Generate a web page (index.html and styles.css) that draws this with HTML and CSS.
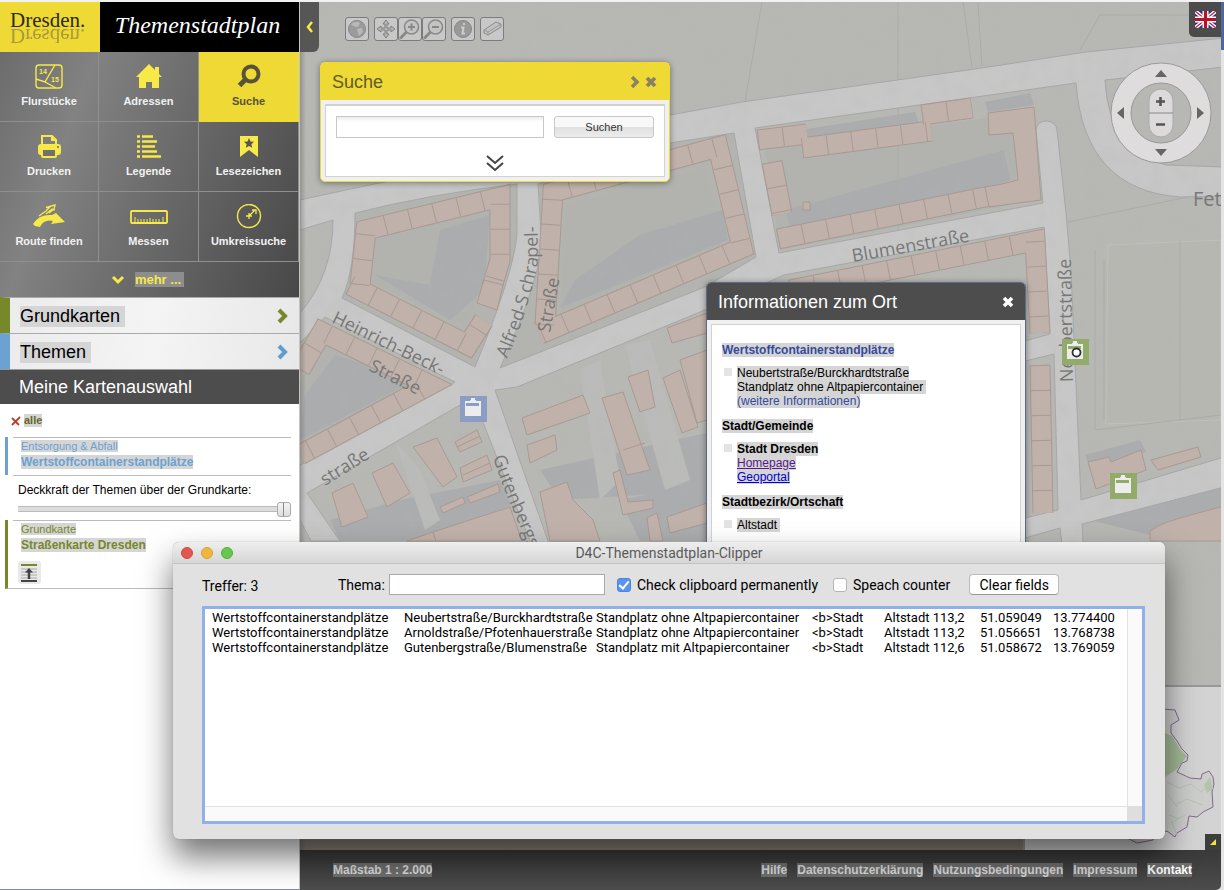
FILE: index.html
```html
<!DOCTYPE html>
<html lang="de">
<head>
<meta charset="utf-8">
<title>Themenstadtplan Dresden</title>
<link rel="stylesheet" href="styles.css">
</head>
<body>
<div class="app">
  <aside class="sidebar">
    <header class="brand">
      <a class="brand-logo" href="#"><span>Dresden.</span><span class="mirror" aria-hidden="true">Dresden.</span></a>
      <h1 class="brand-title">Themenstadtplan</h1>
    </header>
    <nav class="tools">
      <div class="tool-grid">
        <button class="tool" type="button">
          <svg width="28" height="26" viewBox="0 0 28 26"><rect x="1" y="1" width="26" height="23" rx="3" fill="none" stroke="#f7e948" stroke-width="1.4"/><path d="M20 1L10 18L1 15M10 18L21 24" fill="none" stroke="#f7e948" stroke-width="1.4"/><text x="4" y="10" class="tiny">14</text><text x="16" y="18" class="tiny">15</text></svg>
          <span>Flurstücke</span></button>
        <button class="tool" type="button">
          <svg width="28" height="26" viewBox="0 0 28 26"><path d="M14 0L27 13H24V24H17V18H11V24H4V13H1Z" fill="#f7e948"/><path d="M20 3h4v8h-4z" fill="#f7e948"/></svg>
          <span>Adressen</span></button>
        <button class="tool active" type="button">
          <svg width="28" height="26" viewBox="0 0 28 26"><circle cx="16" cy="10" r="7.500" fill="none" stroke="#56533a" stroke-width="4"/><path d="M10.500 15.500L4.500 21.500" stroke="#56533a" stroke-width="5"/></svg>
          <span>Suche</span></button>
        <button class="tool" type="button">
          <svg width="28" height="26" viewBox="0 0 28 26"><path d="M7 12V2h10l4 4v6" fill="none" stroke="#f7e948" stroke-width="2"/><path d="M16 2v5h5z" fill="#f7e948"/><rect x="3" y="10" width="23" height="11" rx="3" fill="#f7e948"/><rect x="7" y="15" width="14" height="8" rx="1" fill="#707070" stroke="#f7e948" stroke-width="2"/><circle cx="23" cy="13" r="1" fill="#707070"/></svg>
          <span>Drucken</span></button>
        <button class="tool" type="button">
          <svg width="28" height="26" viewBox="0 0 28 26"><path d="M2 2.500h3m2 0h11M2 7.500h3m2 0h15M2 12.500h3m2 0h13M2 17.500h3m2 0h15M2 22.500h3m2 0h19" stroke="#f7e948" stroke-width="2.600"/></svg>
          <span>Legende</span></button>
        <button class="tool" type="button">
          <svg width="28" height="26" viewBox="0 0 28 26"><path d="M5 2H23V23L14 16L5 23Z" fill="#f7e948"/><path d="M14 4l1.500 3.500 3.500.3-2.600 2.400.8 3.600L14 12l-3.200 1.800.8-3.600L9 7.800l3.500-.3z" fill="#555"/></svg>
          <span>Lesezeichen</span></button>
        <button class="tool" type="button">
          <svg width="34" height="26" viewBox="0 0 34 26"><path d="M1 20Q7 10 20 11L24 9L33 18L19 20L21 17Q12 15 8 23L3 22Z" fill="#f7e948"/><path d="M7 12L14 7L18 3L14 3.500L23 1L22 6L20 5L14 10M17 9L22 5" fill="none" stroke="#f7e948" stroke-width="1.300"/></svg>
          <span>Route finden</span></button>
        <button class="tool" type="button">
          <svg width="38" height="26" viewBox="0 0 38 26"><rect x="1" y="7" width="36" height="12" rx="1" fill="none" stroke="#f7e948" stroke-width="1.800"/><path d="M5 18v-5M8 18v-3M11 18v-3M14 18v-3M17 18v-3M20 18v-4M23 18v-3M26 18v-3M29 18v-3M33 18v-5" stroke="#f7e948"/></svg>
          <span>Messen</span></button>
        <button class="tool" type="button">
          <svg width="28" height="26" viewBox="0 0 28 26"><circle cx="14" cy="12" r="11.500" fill="none" stroke="#f7e948" stroke-width="1.400"/><path d="M14 12L20 6M17 6h4v4M11 12h6M14 9v6" fill="none" stroke="#f7e948" stroke-width="1.300"/></svg>
          <span>Umkreissuche</span></button>
      </div>
      <button class="more" type="button">
        <svg width="14" height="12" viewBox="0 0 14 12"><path d="M2 3l5 5 5-5" fill="none" stroke="#f7e948" stroke-width="3"/></svg>
        <span>mehr ...</span></button>
    </nav>
    <button class="fold green" type="button"><span class="sel">Grundkarten&nbsp;</span><svg width="14" height="18" viewBox="0 0 14 18"><path d="M4 3l6 6-6 6" fill="none" stroke="#76882a" stroke-width="4"/></svg></button>
    <button class="fold blue" type="button"><span class="sel">Themen&nbsp;</span><svg width="14" height="18" viewBox="0 0 14 18"><path d="M4 3l6 6-6 6" fill="none" stroke="#5f9cd0" stroke-width="4"/></svg></button>
    <h2 class="selection-title">Meine Kartenauswahl</h2>
    <section class="selection">
      <button class="remove-all" type="button"><svg width="10" height="10" viewBox="0 0 10 10"><path d="M1 9L9 1M1 2l7 7" stroke="#b5402c" stroke-width="1.800"/></svg><span class="sel">alle</span></button>
      <div class="layer blue">
        <p><span class="sel">Entsorgung &amp; Abfall</span></p>
        <p><strong class="sel">Wertstoffcontainerstandplätze</strong></p>
      </div>
      <div class="opacity">
        <label for="opacity">Deckkraft der Themen über der Grundkarte:</label>
        <input id="opacity" type="range" min="0" max="100" value="100">
      </div>
      <div class="layer green">
        <p><span class="sel">Grundkarte</span></p>
        <p><strong class="sel">Straßenkarte Dresden</strong></p>
        <button class="to-top" type="button" aria-label="Nach oben"><svg width="16" height="18" viewBox="0 0 16 18"><path d="M0 1h16" stroke="#76882a" stroke-width="2"/><path d="M0 5h16M0 8h16M0 11h16M0 14h16" stroke="#aaa"/><path d="M0 17h16" stroke="#444" stroke-width="2"/><path d="M8 15V6" stroke="#444" stroke-width="2.500"/><path d="M4 8.500L8 4l4 4.500z" fill="#444"/></svg></button>
      </div>
    </section>
  </aside>

  <main class="stage">
    <div class="map">
      <svg class="map-canvas" viewBox="300 2 921 848" preserveAspectRatio="xMinYMin slice">
        <defs>
          <filter id="grain" x="0" y="0" width="100%" height="100%"><feTurbulence type="fractalNoise" baseFrequency="0.060" numOctaves="4" seed="8"/><feColorMatrix values="0 0 0 0 .45  0 0 0 0 .46  0 0 0 0 .44  1.600 0 0 0 -.650"/></filter>
          <path id="r1" d="M360 285L366 230L500 197L500 260L492 287"/>
          <path id="r2" d="M350 285L468 345L484 320"/>
          <path id="r3" d="M545 325L553 192L718 147L742 248L540 334"/>
          <path id="r4" d="M758 140L807 134"/>
          <path id="r5" d="M802 148L931 131"/>
          <path id="r6" d="M922 115L972 108"/>
          <path id="r7" d="M772 162L782 214"/>
          <path id="r8" d="M778 239L990 196"/>
          <path id="r9" d="M790 290L1035 241L1040 333"/>
          <path id="r10" d="M1040 365L1043 513"/>
          <path id="r11" d="M300 370L322 332L430 385L300 455"/>
          <path id="alfred" d="M507 359C522 325 530 300 538 262L537 190"/>
          <path id="guten" d="M493 457C503 490 518 520 540 575"/>
        </defs>
        <rect class="ground" x="300" y="0" width="921" height="850"/>
        <path class="court" d="M370 238L490 208L486 280L468 325L362 280Z"/>
        <path class="court" d="M765 150L985 118L1030 110L1036 200L780 250Z"/>
        <path class="shade" d="M800 130L915 112L920 125L808 140ZM786 210L1004 150L1010 180L984 190L790 228ZM985 102L1030 93L1034 105L988 112Z"/>
        <path class="court" d="M300 380L325 345L425 388L300 448Z"/>
        <path class="shade" d="M305 395L335 355L415 380L300 440ZM330 520L400 500L500 480L512 505L420 541H340ZM540 470L720 430V490L560 500ZM620 500L720 480V541H640ZM1090 520L1221 482V515L1150 535ZM1085 455L1140 440L1146 452L1090 468Z"/>
        <path class="patch" d="M625 345L650 340L690 480L665 490ZM580 370L600 360L620 480L600 500ZM395 440L420 470L440 520L425 530ZM545 350L610 330L615 345L550 365Z"/>
        <path class="field" d="M1108 245L1221 240V420L1106 424Z"/>
        <path class="field-line" d="M762 2L745 102M898 2V240M963 2L972 68M978 2L982 66M1221 15H1100L1080 50M1068 222L1221 190M1095 250V430L1221 415M1104 260L1104 420M1180 240V420"/>
        <g class="road">
          <path d="M300 200Q390 180 520 155L670 115L742 102L982 68L1086 52L1224 38V67L1105 80Q1108 150 1166 165L1224 167V196L1180 197Q1084 190 1076 83L755 128L779 253L1043 203L1036 130Q1037 121 1047 121Q1056 122 1057 130L1066 213L1071 270L1081 500L1224 457V487L1082 524L1084 560H1064L1060 528L1025 538V518L1058 510L1054 354L1025 361V341L1050 334L1044 227L784 275L705 310L517 387L495 390L548 541L620 850H590L530 541L482 420L460 405L307 493L340 541H311L300 520V465L455 382L325 317L300 343V313Q333 275 333 220L300 230Z"/>
          <path d="M355 213Q430 194 517 184V233Q515 270 475 367L342 298Q355 270 355 213Z" class="ground"/>
          <path d="M538 184L670 143L734 133L756 257L705 287L500 368Q545 270 541 233Z" class="ground"/>
        </g>
        <path class="court" d="M378 240L490 210L486 270L466 325L366 280Z"/>
        <path class="shade" d="M440 230L490 215L484 290L450 320L375 275L430 285Z"/>
        <path class="court" d="M566 205L705 168L722 245L560 318Z"/>
        <path class="shade" d="M575 280L640 235L722 210L728 240L560 308Z"/>
        <rect x="300" y="0" width="921" height="850" filter="url(#grain)" opacity=".2"/>
        <g class="edge"><use href="#r1"/><use href="#r2"/><use href="#r3"/><use href="#r4"/><use href="#r5"/><use href="#r6"/><use href="#r7"/><use href="#r8"/><use href="#r9"/><use href="#r10"/><use href="#r11"/></g>
        <g class="fill"><use href="#r1"/><use href="#r2"/><use href="#r3"/><use href="#r4"/><use href="#r5"/><use href="#r6"/><use href="#r7"/><use href="#r8"/><use href="#r9"/><use href="#r10"/><use href="#r11"/></g>
        <g class="split"><use href="#r1"/><use href="#r2"/><use href="#r3"/><use href="#r4"/><use href="#r5"/><use href="#r6"/><use href="#r7"/><use href="#r8"/><use href="#r9"/><use href="#r10"/><use href="#r11"/></g>
        <path class="house" d="M988 113L1034 107L1041 200L989 207L985 187L1002 184L1018 180L1016 160L1013 133L989 135ZM1088 462L1109 457L1111 462L1141 450L1146 470L1096 489ZM1151 460L1198 447L1201 457L1158 470ZM1150 531L1162 524L1180 518L1224 506V541H1150ZM332 493L353 483L368 517L342 527ZM372 473L393 463L410 493L387 507ZM413 447L437 438L457 477L443 487ZM455 442L477 430L482 442L460 452ZM460 468L487 455L492 470L463 482ZM440 507L463 497L465 503L443 513ZM467 497L498 484L500 492L470 503ZM407 541L433 532L510 507L522 541ZM522 418L583 395L590 413L527 435ZM527 445L555 435L557 450L530 463ZM602 398L623 392L650 470L627 475ZM628 377L648 370L655 407L640 412ZM663 378L680 370L698 427L682 433ZM680 360L707 350V420L697 423ZM667 328L707 313V333L672 343ZM540 492L567 482L573 500L593 520L600 541H550ZM613 473L620 470L628 502L653 500V508L623 515ZM667 517L707 503V523L670 533ZM647 518L657 513L663 541H650ZM477 303L484 280L503 285L497 310ZM803 202h7v8h-7z"/>
        <path class="house-line" d="M457 447L480 436M463 475L490 463M623 450L645 443M433 532L436 541M890 840v10"/>
        <g class="street">
          <text transform="translate(853 262) rotate(-10)">Blumenstraße</text>
          <text transform="translate(331 322) rotate(26)">Heinrich-Beck-</text>
          <text transform="translate(368 370) rotate(27)">Straße</text>
          <text transform="translate(325 486) rotate(-32)">straße</text>
          <text transform="translate(550 333) rotate(-80)">Straße</text>
          <text transform="translate(1073 382) rotate(-91)">Neubertstraße</text>
          <text><textPath href="#alfred">Alfred-S&#8201;chrapel-</textPath></text>
          <text><textPath href="#guten">Gutenbergs</textPath></text>
          <text x="1193" y="206" class="big">Fet</text>
        </g>
        <path d="M300 839H1200V850H300Z" fill="#8d857e"/>
        <g>
          <g transform="translate(460 396)"><path d="M0 0h27v26H0z" fill="#8b9dc4"/><path d="M5 5h16v15H5zM10 5V4h1V2h4v2h1v1" fill="#ececec"/><path d="M6 7h13v3H6z" fill="#8b9dc4"/></g>
          <g transform="translate(1062 339)"><path d="M0 0h27v26H0z" fill="#93ab6a"/><path d="M5 5h16v15H5zM10 5V4h1V2h4v2h1v1" fill="#ececec"/><path d="M6 7h13v3H6z" fill="#93ab6a"/><circle cx="14.500" cy="13.500" r="4" fill="#fff" stroke="#2d3038" stroke-width="1.800"/></g>
          <g transform="translate(1110 473)"><path d="M0 0h27v26H0z" fill="#93ab6a"/><path d="M5 5h16v15H5zM10 5V4h1V2h4v2h1v1" fill="#ececec"/><path d="M6 7h13v3H6z" fill="#93ab6a"/></g>
        </g>
      </svg>

      <button class="collapse" type="button" aria-label="Einklappen"><svg width="10" height="14" viewBox="0 0 10 14"><path d="M7 2L3 7l4 5" fill="none" stroke="#f7e948" stroke-width="2.500"/></svg></button>

      <div class="map-tools">
        <button type="button" aria-label="Gesamtansicht"><svg viewBox="0 0 22 22"><circle cx="11" cy="11" r="8.500" fill="#9b9b9b" stroke="#888"/><path d="M5 6q5-4 9-1l-2 4-5-1zM11 11l5-1 1 4-4 4-1-3z" fill="#b8b8b8"/></svg></button>
        <div class="map-tool-group">
          <button type="button" aria-label="Verschieben"><svg viewBox="0 0 22 22"><path d="M11 2l3 4h-2v4h4V8l4 3-4 3v-2h-4v4h2l-3 4-3-4h2v-4H6v2l-4-3 4-3v2h4V6H8z" fill="#b5b5b5" stroke="#808080"/></svg></button>
          <button type="button" aria-label="Vergrößern"><svg viewBox="0 0 22 22"><circle cx="12.500" cy="9" r="7" fill="#c4c4c4" stroke="#8a8a8a" stroke-width="1.600"/><path d="M9 9h7M12.500 5.500v7" stroke="#888" stroke-width="2"/><path d="M7.500 14L1 20.500" stroke="#8a8a8a" stroke-width="3"/></svg></button>
          <button type="button" aria-label="Verkleinern"><svg viewBox="0 0 22 22"><circle cx="12.500" cy="9" r="7" fill="#c4c4c4" stroke="#8a8a8a" stroke-width="1.600"/><path d="M9 9h7" stroke="#888" stroke-width="2"/><path d="M7.500 14L1 20.500" stroke="#8a8a8a" stroke-width="3"/></svg></button>
        </div>
        <button type="button" aria-label="Information"><svg viewBox="0 0 22 22"><circle cx="11" cy="11" r="8.500" fill="#999" stroke="#888"/><path d="M12 5v2M9 9.500h2.500l-1 6h2.500" fill="none" stroke="#ccc" stroke-width="2"/></svg></button>
        <button type="button" aria-label="Löschen"><svg viewBox="0 0 22 22"><path d="M3 12L15 4l5 2v3L7 17l-4-2z" fill="#c2c2c2" stroke="#8a8a8a"/><path d="M3 12l4 2 13-8M7 14v3" fill="none" stroke="#999"/></svg></button>
      </div>

      <section class="panel search">
        <header><h2>Suche</h2>
          <button type="button" aria-label="Minimieren"><svg width="12" height="12" viewBox="0 0 12 12"><path d="M3 1l5 5-5 5" fill="none" stroke="#8a8165" stroke-width="3.500"/></svg></button>
          <button type="button" aria-label="Schließen"><svg width="12" height="12" viewBox="0 0 12 12"><path d="M2 2l8 8M10 2l-8 8" stroke="#8a8165" stroke-width="3.800"/></svg></button>
        </header>
        <form class="panel-body">
          <div class="search-row"><input type="text" aria-label="Suchbegriff"><button type="button">Suchen</button></div>
          <button class="expand" type="button" aria-label="Mehr"><svg width="18" height="18" viewBox="0 0 18 18"><path d="M1 2l8 7 8-7M1 9l8 7 8-7" fill="none" stroke="#444" stroke-width="2"/></svg></button>
        </form>
      </section>

      <section class="panel info">
        <header><h2>Informationen zum Ort</h2>
          <button type="button" aria-label="Schließen"><svg width="12" height="12" viewBox="0 0 12 12"><path d="M2 2l8 8M10 2l-8 8" stroke="#fff" stroke-width="3.600"/></svg></button>
        </header>
        <div class="panel-body">
          <h3 class="topic"><span class="sel">Wertstoffcontainerstandplätze</span></h3>
          <ul><li><span class="sel">Neubertstraße/Burckhardtstraße</span><br><span class="sel">Standplatz ohne Altpapiercontainer&nbsp;</span><br><a class="sel plain" href="#">(weitere Informationen)</a></li></ul>
          <h3><span class="sel">Stadt/Gemeinde</span></h3>
          <ul><li><strong class="sel">Stadt Dresden</strong><br><a class="sel visited" href="#">Homepage</a><br><a class="sel link" href="#">Geoportal</a></li></ul>
          <h3><span class="sel">Stadtbezirk/Ortschaft</span></h3>
          <ul><li><span class="sel">Altstadt&nbsp;</span></li></ul>
        </div>
      </section>

      <a class="language" href="#" aria-label="English"><svg width="21" height="17" viewBox="0 0 21 17"><rect width="21" height="17" rx="1" fill="#2b3484"/><path d="M0 0l21 17M21 0L0 17" stroke="#fff" stroke-width="4"/><path d="M0 0l21 17M21 0L0 17" stroke="#b5213a" stroke-width="1.300"/><path d="M10.500 0v17M0 8.500h21" stroke="#fff" stroke-width="6"/><path d="M10.500 0v17M0 8.500h21" stroke="#b3122b" stroke-width="3.200"/></svg></a>

      <svg class="compass" width="102" height="102" viewBox="0 0 102 102"><circle cx="51" cy="51" r="40" fill="none" stroke="#dedcdc" stroke-width="20"/><circle cx="51" cy="51" r="50" fill="none" stroke="#999"/><circle cx="51" cy="51" r="30" fill="none" stroke="#999"/><rect x="39" y="27" width="24" height="48" rx="12" fill="#dcdada" stroke="#aaa"/><path d="M39 51h24" stroke="#888"/><path d="M46 39.500h9M50.500 35v9M46 62.500h9" stroke="#555" stroke-width="2.600"/><path d="M51 8l6 7H45zM51 94l6-7H45zM7 51l7-6v12zM94 51l-7-6v12z" fill="#666"/></svg>

      <div class="overview"><svg width="196" height="163" viewBox="0 0 196 163"><path d="M20 20L138 22L150 23L154 33L146 38V46L152 54L157 62L163 68L162 74L157 76L152 85L165 91L176 92L177 87L184 84L188 90L189 97L187 105L188 120L178 125L172 130L164 129L162 140L152 146L150 150L142 144L128 148V153L112 156L106 153L80 140Z" fill="#cdcecb" stroke="#85678f"/><path d="M140 46L147 49L155 62L162 69L152 82L140 90L100 80Z" fill="#a4bb97"/><path d="M142 95l12 6 12-4 10 8 10-9M144 128l10 4M150 118l12-6 15 6M143 108l9 12M160 128l-14 8M146 134l6 14" fill="none" stroke="#b6c3b5"/><path d="M179 98l6-8 3 12-6 4z" fill="#b4c4aa"/></svg>
        <button type="button" aria-label="Übersicht schließen"><svg width="6" height="6" viewBox="0 0 6 6"><path d="M6 0v6H0z" fill="#f4e33c"/></svg></button>
      </div>
    </div>
    <footer class="footer">
      <span class="sel">Maßstab 1 : 2.000</span>
      <nav><a class="sel" href="#">Hilfe</a><a class="sel" href="#">Datenschutzerklärung</a><a class="sel" href="#">Nutzungsbedingungen</a><a class="sel" href="#">Impressum</a><a class="sel bright" href="#">Kontakt</a></nav>
    </footer>
  </main>
</div>

<section class="window">
  <header class="titlebar">
    <div class="lights"><button type="button" aria-label="Close"></button><button type="button" aria-label="Minimize"></button><button type="button" aria-label="Zoom"></button></div>
    <h2>D4C-Themenstadtplan-Clipper</h2>
  </header>
  <form class="window-body">
    <div class="controls">
      <output>Treffer: 3</output>
      <label for="thema">Thema:</label><input id="thema" type="text">
      <label class="check"><input type="checkbox" checked>Check clipboard permanently</label>
      <label class="check second"><input type="checkbox">Speach counter</label>
      <button type="button">Clear fields</button>
    </div>
    <div class="list">
      <div class="rows">
        <table>
          <colgroup><col class="c-topic"><col class="c-topic"><col class="c-place"><col class="c-city"><col class="c-part"><col class="c-lat"><col></colgroup>
          <tbody>
          <tr><td>Wertstoffcontainerstandplätze</td><td>Neubertstraße/Burckhardtstraße</td><td>Standplatz ohne Altpapiercontainer</td><td>&lt;b&gt;Stadt</td><td>Altstadt 113,2</td><td>51.059049</td><td>13.774400</td></tr>
          <tr><td>Wertstoffcontainerstandplätze</td><td>Arnoldstraße/Pfotenhauerstraße</td><td>Standplatz ohne Altpapiercontainer</td><td>&lt;b&gt;Stadt</td><td>Altstadt 113,2</td><td>51.056651</td><td>13.768738</td></tr>
          <tr><td>Wertstoffcontainerstandplätze</td><td>Gutenbergstraße/Blumenstraße</td><td>Standplatz mit Altpapiercontainer</td><td>&lt;b&gt;Stadt</td><td>Altstadt 112,6</td><td>51.058672</td><td>13.769059</td></tr>
          </tbody>
        </table>
      </div>
      <div class="v-track"></div><div class="h-track"></div><div class="corner"></div>
    </div>
  </form>
</section>
</body>
</html>
```

FILE: styles.css
```css
* { box-sizing: border-box; }
html, body { height: 100%; }
body { margin: 0; overflow: hidden; font-family: "Liberation Sans", Arial, sans-serif; font-size: 12px; line-height: 14px; color: #000; background: linear-gradient(#4c66a0 50px, #e4e4e4 50px); }
h1, h2, h3, p, ul { margin: 0; padding: 0; font-weight: normal; }
button { font: inherit; color: inherit; border: 0; padding: 0; background: none; }
svg { display: block; }
.sel { background: #d5d5d5; }

.app { display: grid; grid-template-columns: 300px 1fr; height: 100vh; border-top: 2px solid #f2f2f2; padding-right: 3px; }
.sidebar { background: #fff; border-right: 1px solid #c4c4c4; border-bottom: 1px solid #7d8aa3; }
.brand { display: flex; height: 50px; background: #000; }
.brand-logo { width: 100px; background: #efd935; color: #2b2a1c; text-decoration: none; font: 21px/18px "Liberation Serif", serif; padding: 9px 10px; display: flex; flex-direction: column; }
.brand-logo .mirror { transform: scaleY(-1); color: #a89a38; margin-top: -2px; }
.brand-title { flex: 1; color: #fff; font: italic 24px/46px "Liberation Serif", serif; text-align: center; padding-right: 4px; }

.tools { background: linear-gradient(110deg, #6c6c6c, #828282 25%, #6a6a6a 55%, #484848); color: #f2f2f2; }
.tool-grid { display: grid; grid-template-columns: 99px 100px 100px; }
.tool { height: 70px; display: flex; flex-direction: column; align-items: center; padding-top: 12px; gap: 4px; font-weight: bold; font-size: 11px; line-height: 14px; border-right: 1px solid #8f8f8f; border-bottom: 1px solid #8f8f8f; }
.tool.active { background: #efd935; color: #56533a; border-color: #efd935; }
.tiny { font: bold 7px "Liberation Sans", sans-serif; fill: #f7e948; }
.more { width: 100%; height: 35px; display: flex; align-items: center; justify-content: center; gap: 10px; padding-right: 4px; color: #f7e948; font-weight: bold; font-size: 13px; line-height: 15px; }
.more span { background: #8d8d8d; padding-right: 3px; }

.fold { width: 100%; height: 36px; display: flex; align-items: center; justify-content: space-between; padding: 1px 10px 0; font-size: 18px; line-height: 21px; border-left: 10px solid #76882a; border-top: 1px solid #aaa; background: linear-gradient(100deg, #ececec, #f4f4f4 50%, #e8e8e8); }
.fold.blue { border-left-color: #6ba2d2; }
.selection-title { background: #4d4d4d; color: #fff; font-size: 18px; line-height: 34px; padding-left: 19px; border-top: 1px solid #999; }
.selection { padding: 10px 8px 0 5px; border-left: 1px solid #ddd; margin-left: -1px; }
.remove-all { display: flex; gap: 3px; align-items: center; margin: 0 0 10px 6px; font-weight: bold; font-size: 11px; line-height: 13px; color: #65652a; }
.layer { border-left: 3px solid; padding-left: 5px; font-size: 11px; line-height: 16px; }
.layer p { padding-left: 8px; }
.layer p:first-child { border-top: 1px solid #bbb; font-size: 11px; }
.layer strong { font-size: 12px; }
.layer.blue { color: #6ba2d2; padding-bottom: 5px; }
.layer.green { color: #76882a; height: 69px; border-bottom: 1px solid #bbb; }
.opacity { margin-left: 8px; border-top: 1px solid #bbb; padding: 7px 0 0 5px; }
.opacity label { display: block; }
.opacity input { appearance: none; display: block; width: 100%; height: 16px; margin: 4px 0 3px; background: linear-gradient(#bbb, #bbb) 0 5px/100% 1px no-repeat, linear-gradient(#ddd, #ddd) 0 6px/100% 4px no-repeat, linear-gradient(#bbb, #bbb) 0 10px/100% 1px no-repeat; }
.opacity input::-webkit-slider-thumb { appearance: none; width: 14px; height: 15px; border: 1px solid #aaa; border-radius: 3px; background: linear-gradient(90deg, transparent 5px, #888 5px, #888 6px, transparent 6px), linear-gradient(#f4f4f4, #ddd); }
.to-top { background: #e9e9e9; padding: 3px; border-radius: 3px; margin: 8px 0 0 5px; width: 23px; height: 23px; }

.stage { display: grid; grid-template-rows: 1fr 40px; min-width: 0; min-height: 0; }
.map { position: relative; overflow: hidden; }
.map::after { content: ""; position: absolute; left: 0; top: 50px; bottom: 0; width: 6px; background: linear-gradient(90deg, rgba(80, 80, 80, .35), transparent); }
.map-canvas { width: 100%; height: 100%; position: absolute; inset: 0; }
.ground { fill: #b7b8b3; }
.court { fill: #b2b3af; }
.shade { fill: #abacae; }
.patch { fill: #bbbbb9; }
.field { fill: #b5b7b0; stroke: #bfc0bb; }
.field-line { fill: none; stroke: #abaca9; }
.road path { stroke: #a6a7a6; }
.road > path:first-child { fill: #c7c7c7; }
.road .ground { fill: #b3b3b0; }
.edge, .fill, .split { fill: none; }
.edge { stroke: #a89a92; stroke-width: 21; }
.fill { stroke: #c0b2aa; stroke-width: 19; }
.split { stroke: #a89a92; stroke-width: 19; stroke-dasharray: 1 24; }
.house { fill: #c0b2aa; stroke: #a89a92; }
.house-line { fill: none; stroke: #a89a92; }
.street { font: 18px "Open Sans", "Noto Sans", sans-serif; fill: #777; }
.street .big { font-size: 20px; }

.collapse { position: absolute; left: 0; top: 0; width: 19px; height: 50px; background: #565656; border-radius: 0 0 6px 0; display: grid; place-items: center; }
.map-tools { position: absolute; left: 45px; top: 15px; display: flex; gap: 5px; }
.map-tool-group { display: flex; }
.map-tools button { width: 24px; height: 24px; border: 1px solid #7c7c7c; border-radius: 3px; background: #c8c8c8; }

.panel { position: absolute; border-radius: 5px; background: #f0f0f0; box-shadow: 0 1px 6px rgba(0, 0, 0, .4); }
.panel header { height: 37px; display: flex; align-items: center; gap: 4px; padding: 0 12px; }
.panel h2 { flex: 1; font-size: 18px; line-height: 22px; }
.panel-body { background: #fff; border: 1px solid #d2d2d2; margin: 4px; }
.search { left: 20px; top: 60px; width: 350px; border: 1px solid #efd935; }
.search header { background: #efd935; color: #625b2e; padding-left: 11px; }
.search .panel-body { border-top-width: 2px; padding: 10px; height: 73px; }
.search-row { display: flex; gap: 10px; }
.search-row input { flex: 1; min-width: 0; height: 22px; border: 1px solid #c8c8c8; background: linear-gradient(#ececec, #fff 5px); }
.search-row button { width: 100px; height: 22px; border: 1px solid #c8c8c8; border-radius: 3px; font-size: 11px; color: #333; background: linear-gradient(#f8f8f8 50%, #e0e0e0 50%, #ececec); }
.expand { display: block; margin: 16px auto 0; }
.info { left: 406px; top: 280px; width: 320px; height: 300px; border: 1px solid #5c6a86; }
.info header { background: #4d4d4d; color: #fff; padding: 0 11px; border-radius: 4px 4px 0 0; }
.info .panel-body { padding: 18px 10px; height: 260px; }
.info h3 { font-size: 12px; line-height: 14px; font-weight: bold; margin-bottom: 9px; }
.info .topic { color: #344a9c; }
.info ul { list-style: none; margin-bottom: 11px; }
.info li { padding-left: 15px; background: linear-gradient(#e4e4e4, #e4e4e4) 2px 2px/8px 8px no-repeat; }
.info a { text-decoration: underline; }
.info .plain { color: #344a9c; text-decoration: none; }
.info .visited { color: #551a8b; }
.info .link { color: #0000d8; }

.language { position: absolute; right: 0; top: 0; width: 32px; height: 35px; background: #4b4b4b; border-radius: 0 0 0 5px; display: grid; place-items: center; }
.compass { position: absolute; right: 9px; top: 60px; }
.overview { position: absolute; right: 0; bottom: 0; background: #d3d3d3; border-top: 2px solid #999; border-left: 2px solid #999; }
.overview button { position: absolute; right: 0; bottom: 0; width: 16px; height: 16px; background: #3d3d3d; display: grid; place-items: center; }
.footer { display: flex; align-items: center; justify-content: space-between; padding: 0 29px 0 33px; background: linear-gradient(#393939, #4c4c4c); color: #dcdcdc; font-weight: bold; border-radius: 0 0 5px 0; }
.footer nav { display: flex; gap: 10px; }
.footer a { color: inherit; text-decoration: none; }
.footer .sel { background: #707070; }
.footer .bright { color: #fff; }

.window { position: absolute; left: 173px; right: 59px; top: 542px; border-radius: 6px; background: #e1e1e1; box-shadow: 0 0 1px #777, 0 18px 32px rgba(0, 0, 0, .55); font-family: Roboto, "Noto Sans", sans-serif; font-size: 13px; line-height: 15px; }
.titlebar { display: flex; align-items: center; height: 22px; padding: 0 8px; border-bottom: 1px solid #c3c3c3; border-radius: 6px 6px 0 0; background: linear-gradient(#eee, #d6d6d6); }
.titlebar h2 { flex: 1; text-align: center; font-size: 14px; line-height: 16px; color: #5a5a5a; padding-right: 52px; }
.lights { display: flex; gap: 8px; }
.lights button { width: 12px; height: 12px; border-radius: 50%; background: #e2564f; border: 1px solid #cf4a44; }
.lights button:nth-child(2) { background: #f0b73c; border-color: #d9a12f; }
.lights button:nth-child(3) { background: #66c84c; border-color: #54ae3d; }
.window-body { padding: 9px 20px 15px 29px; }
.controls { display: flex; align-items: center; height: 23px; margin-bottom: 10px; font-size: 14px; line-height: 16px; }
.controls output { width: 136px; padding-top: 3px; }
.controls input[type="text"] { width: 216px; height: 21px; margin: 0 12px 0 4px; border: 1px solid #aaa; background: #fff; }
.controls > label:first-of-type { width: 47px; }
.check { display: flex; align-items: center; gap: 6px; }
.check input { appearance: none; width: 14px; height: 14px; margin: 0; border: 1px solid #b5b5b5; border-radius: 3px; background: #fff; }
.check input:checked { border-color: #4a86e0; background: #5a94ee; display: grid; place-items: center; }
.check input:checked::before { content: ""; width: 4px; height: 8px; margin-bottom: 2px; border: solid #fff; border-width: 0 2px 2px 0; transform: rotate(40deg); }
.check.second { margin: 0 19px 0 15px; }
.controls button { width: 90px; height: 21px; border: 1px solid #bbb; border-bottom-color: #999; border-radius: 4px; background: #fff; }
.list { display: grid; grid-template-columns: 1fr 15px; grid-template-rows: 197px 15px; border: 3px solid #8fb0e8; background: #fff; }
.rows { padding: 1px 0 0 7px; }
.rows table { border-collapse: collapse; table-layout: fixed; width: 100%; }
.rows td { padding: 0; white-space: nowrap; height: 15px; }
.c-topic { width: 192px; }
.c-place { width: 216px; }
.c-city { width: 72px; }
.c-part { width: 96px; }
.c-lat { width: 73px; }
.v-track { border-left: 1px solid #e2e2e2; background: #fafafa; }
.h-track { border-top: 1px solid #e2e2e2; background: #fafafa; }
.corner { background: #dedede; }
```
